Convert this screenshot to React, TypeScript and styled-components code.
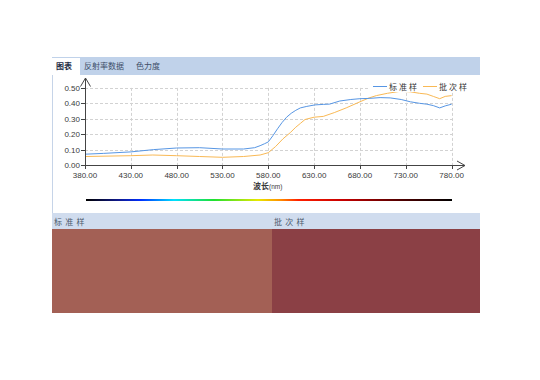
import styled, { createGlobalStyle } from 'styled-components';

const GlobalStyle = createGlobalStyle`
  body {
    margin: 0;
    background: #fff;
    font-family: "Liberation Sans", "Noto Sans CJK SC", sans-serif;
  }
`;

const Page = styled.div`
  padding: 57px 0 0 52px;
`;

const Panel = styled.div`
  display: flex;
  flex-direction: column;
  width: 428px;
`;

const TabBar = styled.div`
  display: flex;
  align-items: flex-end;
  height: 18px;
  background: #c0d2ea;
`;

const Tab = styled.div<{ $active?: boolean }>`
  height: 17px;
  line-height: 17px;
  padding: 0 8px 0 4px;
  font-size: 8px;
  font-weight: ${(p) => (p.$active ? 700 : 400)};
  color: ${(p) => (p.$active ? '#1c2c44' : '#3e4f68')};
  background: ${(p) => (p.$active ? '#fff' : 'transparent')};
`;

const ChartArea = styled.div`
  display: flex;
  flex-direction: column;
  height: 138px;
  box-sizing: border-box;
  border-left: 1px solid #c6d4e8;
`;

const ChartSvg = styled.svg`
  display: block;
  width: 427px;
  height: 120px;
`;

const SpectrumBar = styled.div`
  margin: 4px 0 0 33px;
  width: 366px;
  height: 2px;
  background: linear-gradient(
    to right,
    #000 0%,
    #101a90 9%,
    #0030ff 15%,
    #00e0ff 24%,
    #20e030 35%,
    #e8e800 47%,
    #ff9000 53%,
    #ff2000 58%,
    #c80000 70%,
    #500000 86%,
    #000 100%
  );
`;

const Row = styled.div<{ $height: number }>`
  display: grid;
  grid-template-columns: 220px 1fr;
  height: ${(p) => p.$height}px;
`;

const HeaderCell = styled.div`
  display: flex;
  align-items: center;
  padding-left: 2px;
  background: #d0dcee;
  font-size: 8px;
  letter-spacing: 0.5px;
  color: #4a586c;
`;

const Swatch = styled.div<{ $color: string }>`
  background: ${(p) => p.$color};
`;

const AxisText = styled.text`
  font-family: "Liberation Sans", "Noto Sans CJK SC", sans-serif;
  font-size: 8px;
  fill: #3a3a3a;
`;

const LegendText = styled.text`
  font-family: "Liberation Sans", "Noto Sans CJK SC", sans-serif;
  font-size: 8px;
  letter-spacing: 2px;
  fill: #333;
`;

const px = (nm: number) => 85 + (nm - 380) * 0.9165;
const py = (v: number) => 165 - v * 154.2;

const standard: [number, number][] = [
  [380, 0.07], [400, 0.075], [430, 0.085], [455, 0.1], [480, 0.11], [505, 0.112],
  [530, 0.104], [553, 0.104], [565, 0.112], [571, 0.125], [576, 0.138], [580, 0.15],
  [585, 0.19], [590, 0.235], [595, 0.275], [600, 0.31], [605, 0.335], [610, 0.355],
  [615, 0.37], [622, 0.38], [631, 0.39], [640, 0.393], [647, 0.395], [658, 0.415],
  [670, 0.425], [680, 0.43], [690, 0.432], [702, 0.437], [713, 0.435], [725, 0.425],
  [735, 0.41], [745, 0.4], [753, 0.394], [760, 0.385], [767, 0.37], [773, 0.383],
  [780, 0.394],
];

const batch: [number, number][] = [
  [380, 0.055], [430, 0.06], [454, 0.065], [480, 0.06], [505, 0.055], [530, 0.05],
  [553, 0.055], [571, 0.065], [580, 0.08], [588, 0.12], [596, 0.17], [604, 0.21],
  [610, 0.245], [615, 0.27], [620, 0.295], [630, 0.31], [640, 0.315], [652, 0.34],
  [665, 0.37], [680, 0.41], [690, 0.435], [698, 0.45], [710, 0.465], [724, 0.478],
  [735, 0.475], [745, 0.465], [753, 0.46], [760, 0.445], [767, 0.43], [773, 0.445],
  [780, 0.45],
];

const toPoints = (data: [number, number][]) =>
  data.map(([nm, v]) => `${px(nm).toFixed(1)},${py(v).toFixed(1)}`).join(' ');

const yTicks = [0, 0.1, 0.2, 0.3, 0.4, 0.5];
const xTicks = [380, 430, 480, 530, 580, 630, 680, 730, 780];

const Chart = () => (
  <ChartSvg viewBox="53 75 427 120">
    {yTicks.slice(1).map((v) => (
      <line key={v} x1={85} x2={452} y1={Math.round(py(v)) + 0.5} y2={Math.round(py(v)) + 0.5}
        stroke="#d2d2d2" strokeDasharray="3 2" />
    ))}
    {xTicks.slice(1).map((nm) => (
      <line key={nm} x1={Math.round(px(nm)) + 0.5} x2={Math.round(px(nm)) + 0.5} y1={py(0.5)} y2={165}
        stroke="#d2d2d2" strokeDasharray="3 2" />
    ))}

    <polyline points={toPoints(batch)} fill="none" stroke="#f9b955" strokeWidth={1} />
    <polyline points={toPoints(standard)} fill="none" stroke="#5796e4" strokeWidth={1} />

    <g stroke="#444" fill="none">
      <line x1={85.5} x2={85.5} y1={78} y2={166} />
      <polyline points="80.5,86.5 85.5,78 90.5,86.5" />
      <line x1={85} x2={465} y1={165.5} y2={165.5} />
      <polyline points="457,161 465,165.5 457,170" />
      {yTicks.map((v) => (
        <line key={v} x1={81} x2={85} y1={Math.round(py(v)) + 0.5} y2={Math.round(py(v)) + 0.5} />
      ))}
      {xTicks.map((nm) => (
        <line key={nm} x1={Math.round(px(nm)) + 0.5} x2={Math.round(px(nm)) + 0.5} y1={165} y2={169} />
      ))}
    </g>

    {yTicks.map((v) => (
      <AxisText key={v} x={80} y={py(v) + 3} textAnchor="end">{v.toFixed(2)}</AxisText>
    ))}
    {xTicks.map((nm) => (
      <AxisText key={nm} x={px(nm)} y={178} textAnchor="middle">{nm.toFixed(2)}</AxisText>
    ))}
    <AxisText x={253} y={189}>
      <tspan fontWeight={700}>波长</tspan>
      <tspan fontSize={6.5}>(nm)</tspan>
    </AxisText>

    <rect x={369} y={80} width={102} height={12} fill="#fff" />
    <line x1={373} x2={387} y1={86.5} y2={86.5} stroke="#5796e4" />
    <LegendText x={389} y={89.5}>标准样</LegendText>
    <line x1={423} x2={437} y1={86.5} y2={86.5} stroke="#f9b955" />
    <LegendText x={439} y={89.5}>批次样</LegendText>
  </ChartSvg>
);

const App = () => (
  <>
    <GlobalStyle />
    <Page>
      <Panel>
        <TabBar>
          <Tab $active>图表</Tab>
          <Tab>反射率数据</Tab>
          <Tab>色力度</Tab>
        </TabBar>
        <ChartArea>
          <Chart />
          <SpectrumBar />
        </ChartArea>
        <Row $height={16}>
          <HeaderCell>标 准 样</HeaderCell>
          <HeaderCell>批 次 样</HeaderCell>
        </Row>
        <Row $height={84}>
          <Swatch $color="#a36055" />
          <Swatch $color="#8b4045" />
        </Row>
      </Panel>
    </Page>
  </>
);

export default App;
